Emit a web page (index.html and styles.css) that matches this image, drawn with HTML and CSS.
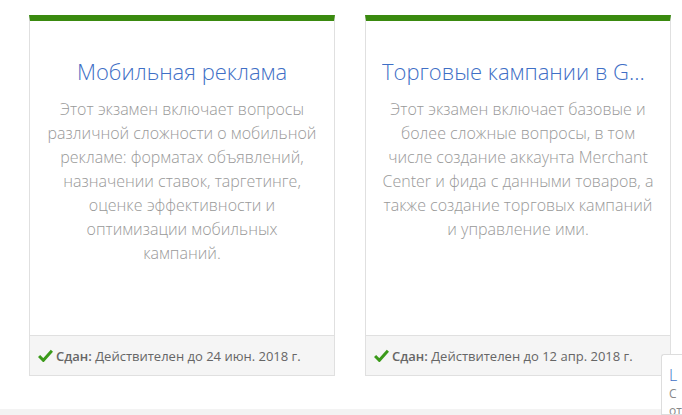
FILE: index.html
```html
<!DOCTYPE html>
<html lang="ru">
<head>
  <meta charset="UTF-8" />
  <meta name="viewport" content="width=device-width, initial-scale=1.0"/>
  <title>Экзамены</title>
  <link rel="stylesheet" href="styles.css">
</head>
<body>
  <div class="page">
    <div class="cards">
      <div class="card">
        <div class="card-body">
          <h2 class="card-title">Мобильная реклама</h2>
          <p class="card-text">Этот экзамен включает вопросы<br>различной сложности о мобильной<br>рекламе: форматах объявлений,<br>назначении ставок, таргетинге,<br>оценке эффективности и<br>оптимизации мобильных<br>кампаний.</p>
        </div>
        <div class="card-footer">
          <svg class="check" viewBox="0 0 14 12" width="15" height="13"><path d="M1 6.5 L5 10.5 L13 1.5" fill="none" stroke="#3b9a1a" stroke-width="2.8"/></svg>
          <span><strong>Сдан:</strong> Действителен до 24 июн. 2018 г.</span>
        </div>
      </div>
      <div class="card">
        <div class="card-body">
          <h2 class="card-title">Торговые кампании в Google Рекламе</h2>
          <p class="card-text">Этот экзамен включает базовые и<br>более сложные вопросы, в том<br>числе создание аккаунта Merchant<br>Center и фида с данными товаров, а<br>также создание торговых кампаний<br>и управление ими.</p>
        </div>
        <div class="card-footer">
          <svg class="check" viewBox="0 0 14 12" width="15" height="13"><path d="M1 6.5 L5 10.5 L13 1.5" fill="none" stroke="#3b9a1a" stroke-width="2.8"/></svg>
          <span><strong>Сдан:</strong> Действителен до 12 апр. 2018 г.</span>
        </div>
      </div>
    </div>
    <div class="bottom-strip"></div>
  </div>

  <div class="popup">
    <div class="popup-title">L</div>
    <div class="popup-text">С</div>
    <div class="popup-text">от</div>
  </div>
</body>
</html>
```

FILE: styles.css
```css
html, body {
  margin: 0;
  padding: 0;
  overflow: hidden;
}
body {
  font-family: 'Open Sans', 'Noto Sans', sans-serif;
  background-color: #fff;
  width: 682px;
  height: 415px;
  position: relative;
}
.page {
  padding-top: 15px;
}
.cards {
  display: flex;
  gap: 30px;
  padding-left: 29px;
}
.card {
  width: 306px;
  height: 361px;
  box-sizing: border-box;
  border: 1px solid #e0e0e0;
  border-top: 6px solid #3a8a0f;
  display: flex;
  flex-direction: column;
}
.card-body {
  flex: 1;
  padding: 35px 14px 0;
  text-align: center;
}
.card-title {
  margin: 0 2px;
  font-size: 22px;
  font-weight: 300;
  line-height: 30px;
  color: #3f6fc6;
  white-space: nowrap;
  overflow: hidden;
  text-overflow: ellipsis;
}
.card-text {
  margin: 11px -6px 0;
  font-size: 16px;
  font-weight: 300;
  line-height: 24px;
  color: #999;
}
.card-footer {
  height: 39px;
  border-top: 1px solid #e0e0e0;
  background-color: #f5f5f5;
  display: flex;
  align-items: center;
  gap: 3px;
  padding-left: 8px;
  font-size: 13px;
  color: #666;
}
.card-footer strong {
  font-weight: 600;
}
.check {
  display: block;
}
.bottom-strip {
  margin-top: 33px;
  height: 7px;
  background-color: #f3f3f3;
}
.popup {
  position: absolute;
  left: 661px;
  top: 354px;
  width: 21px;
  height: 61px;
  background-color: #fff;
  border: 1px solid #ddd;
  border-right: 0;
  border-radius: 3px 0 0 0;
  padding: 9px 0 0 7px;
  box-sizing: border-box;
  overflow: hidden;
}
.popup-title {
  font-size: 16px;
  line-height: 22px;
  color: #3f6fc6;
  font-weight: 300;
}
.popup-text {
  font-size: 12px;
  line-height: 16.5px;
  color: #888;
}
```
